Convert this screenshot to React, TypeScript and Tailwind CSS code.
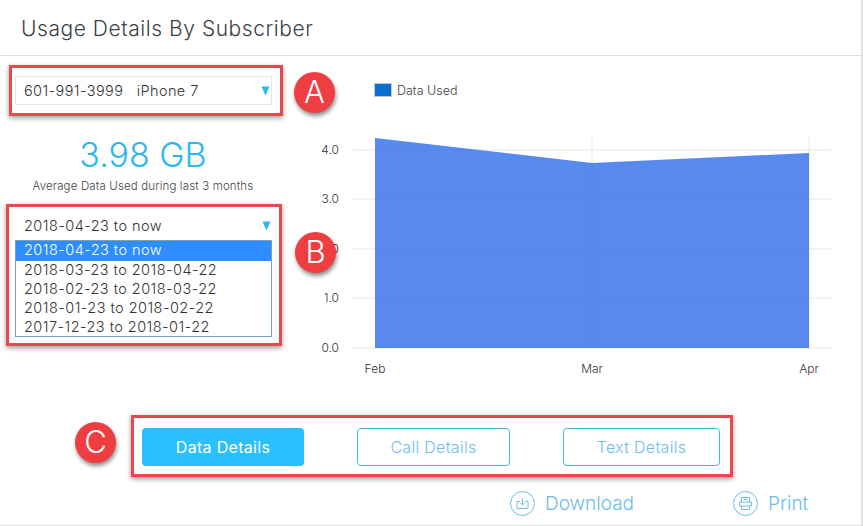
const periods = [
  "2018-04-23 to now",
  "2018-03-23 to 2018-04-22",
  "2018-02-23 to 2018-03-22",
  "2018-01-23 to 2018-02-22",
  "2017-12-23 to 2018-01-22",
];

const gridLines = [150, 199, 249, 298, 348];
const yLabels = ["4.0", "3.0", "2.0", "1.0", "0.0"];

function Arrow() {
  return (
    <svg width="9" height="10" viewBox="0 0 9 10" className="shrink-0">
      <path d="M0.5 0.5H8.5L4.5 9.5Z" fill="#2bb8f0" />
    </svg>
  );
}

function Badge({ letter, className }: { letter: string; className: string }) {
  return (
    <div
      className={
        "absolute w-[41px] h-[41px] rounded-full bg-[#ef3e42] text-white flex items-center justify-center text-[31px] font-['Inter',sans-serif] font-light shadow-[1px_3px_4px_rgba(0,0,0,0.45)] " +
        className
      }
    >
      {letter}
    </div>
  );
}

function Chart() {
  return (
    <svg width="563" height="280" viewBox="300 110 563 280" className="block">
      {gridLines.map((y) => (
        <line key={y} x1="353" x2="831" y1={y} y2={y} stroke="#e6e6e6" strokeWidth="1" />
      ))}
      <line x1="592" x2="592" y1="137" y2="348" stroke="#e6e6e6" />
      <line x1="809" x2="809" y1="137" y2="348" stroke="#e6e6e6" />
      <path d="M375 138L592 163L809 153V348H375Z" fill="#4a7fea" fillOpacity="0.92" />
      {yLabels.map((label, i) => (
        <text key={label} x="339" y={gridLines[i] + 4} textAnchor="end" fontSize="12" fontWeight="300" fill="#333">
          {label}
        </text>
      ))}
      <text x="375" y="373" textAnchor="middle" fontSize="12" fontWeight="300" fill="#333">Feb</text>
      <text x="592" y="373" textAnchor="middle" fontSize="12" fontWeight="300" fill="#333">Mar</text>
      <text x="809" y="373" textAnchor="middle" fontSize="12" fontWeight="300" fill="#333">Apr</text>
    </svg>
  );
}

export default function App() {
  return (
    <div className="relative w-[863px] h-[526px] bg-white overflow-hidden font-['Inter',sans-serif] text-[#333] border-r-2 border-b border-[#e2e2e2]">
      <header className="h-[56px] border-b border-[#dcdcdc] pl-[21px] pt-[1px] flex items-center">
        <h1 className="text-[21px] font-light tracking-[0.55px] text-[#3a3f45] leading-none">Usage Details By Subscriber</h1>
      </header>

      <div className="flex h-[334px]">
        <div className="w-[300px] shrink-0 flex flex-col">
          <div className="ml-[9px] mt-[9px] w-[274px] h-[51px] border-[3px] border-[#e8484d] shadow-[0_2px_5px_rgba(0,0,0,0.4)] pl-[3px] pt-[8px]">
            <div className="w-[257px] h-[29px] border border-[#e4e7ea] flex items-center justify-between pl-[8px] pr-[1px] text-[14.5px] tracking-[0.4px] font-light">
              <span className="whitespace-pre">601-991-3999   iPhone 7</span>
              <Arrow />
            </div>
          </div>

          <div className="w-[286px] mt-[19px] text-center text-[34px] leading-[40px] font-light text-[#2bb6f2]">3.98 GB</div>
          <div className="w-[286px] mt-[4px] text-center text-[11.5px] tracking-[0.15px] leading-[14px] font-light text-[#444]">Average Data Used during last 3 months</div>

          <div className="ml-[6px] mt-[11px] w-[276px] h-[142px] border-[3px] border-[#e8484d] shadow-[0_2px_5px_rgba(0,0,0,0.4)] pl-[6px] pt-[5px]">
            <div className="w-[257px] h-[28px] flex items-center justify-between pl-[9px] pr-[1px] text-[14.5px] tracking-[0.45px] font-light">
              <span>2018-04-23 to now</span>
              <Arrow />
            </div>
            <ul className="w-[257px] h-[97px] border border-[#7f9db9] text-[14.5px] tracking-[0.45px] leading-[18px] font-light">
              {periods.map((p, i) => (
                <li key={p} className={i === 0 ? "pl-[8px] h-[20px] bg-[#2e8eff] text-white" : "pl-[8px] h-[19px]"}>
                  {p}
                </li>
              ))}
            </ul>
          </div>
        </div>

        <div className="flex-1 flex flex-col">
          <div className="ml-[74px] mt-[27px] h-[27px] flex items-start gap-[5px]">
            <span className="w-[18px] h-[14px] bg-[#0a70cf] border border-[#c4c8cc]" />
            <span className="text-[12.5px] leading-[15px] font-light text-[#444]">Data Used</span>
          </div>
          <Chart />
        </div>
      </div>

      <div className="ml-[131px] mt-[25px] w-[602px] h-[62px] border-[3px] border-[#e8484d] shadow-[0_2px_5px_rgba(0,0,0,0.4)] flex items-center pl-[8px] pt-[2px] text-[16px] tracking-[0.3px] font-light">
        <button className="w-[162px] h-[38px] rounded-[4px] bg-[#2abfff] text-white font-normal">Data Details</button>
        <button className="ml-[53px] w-[153px] h-[38px] rounded-[4px] border border-[#45b8e4] text-[#6dbdeb]">Call Details</button>
        <button className="ml-[53px] w-[157px] h-[38px] rounded-[4px] border border-[#45b8e4] text-[#6dbdeb]">Text Details</button>
      </div>

      <div className="flex mt-[14px] text-[19px] font-light text-[#6dbdeb] leading-[24px]">
        <div className="ml-[510px] flex items-center gap-[10px]">
          <svg width="25" height="25" viewBox="0 0 25 25" fill="none" stroke="#6dbdeb" strokeWidth="1">
            <circle cx="12.5" cy="12.5" r="12" />
            <path d="M10 10.5H7V17.5H18V10.5H15M12.5 7.5V14M10.5 12L12.5 14L14.5 12" />
          </svg>
          <span>Download</span>
        </div>
        <div className="ml-[99px] flex items-center gap-[10px]">
          <svg width="25" height="25" viewBox="0 0 25 25" fill="none" stroke="#6dbdeb" strokeWidth="1">
            <circle cx="12.5" cy="12.5" r="12" />
            <path d="M8.5 11V6.5H16.5V11M10.5 8.5H14.5M6.5 11H18.5V15H6.5ZM8.5 15V18.5H16.5V15" />
          </svg>
          <span>Print</span>
        </div>
      </div>

      <Badge letter="A" className="left-[294px] top-[72px]" />
      <Badge letter="B" className="left-[295px] top-[232px]" />
      <Badge letter="C" className="left-[75px] top-[422px]" />
    </div>
  );
}
